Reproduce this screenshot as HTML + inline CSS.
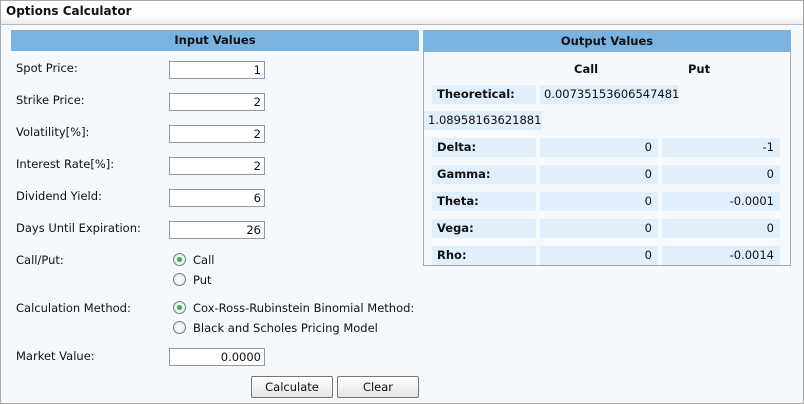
<!DOCTYPE html><html><head><style>
*{margin:0;padding:0;box-sizing:border-box}
body{width:804px;height:404px;background:#fff;font-family:"DejaVu Sans","Liberation Sans",sans-serif;font-size:11.5px;color:#111;position:relative;overflow:hidden}
.a{position:absolute}
.frame{left:0;top:0;width:804px;height:404px;border:1px solid #a8a8a8;background:#f5f9fc}
.top{left:1px;top:1px;width:802px;height:24px;background:linear-gradient(#fff,#fff 60%,#ececec);border-bottom:1px solid #b8b8b8;font-weight:bold;font-size:12px;padding:3px 5px}
.hd{background:#7ab3e0;font-weight:bold;text-align:center;height:21px;line-height:21px}
.lbl{left:16px}
.in{left:169px;width:96px;height:18px;background:#fff;border:1px solid #7f9db9;text-align:right;padding-right:3px;line-height:16px}
.rad{width:13px;height:13px;border-radius:50%;border:1px solid #6c7d90;background:radial-gradient(#fff,#dde4ea)}
.rad.on::after{content:"";position:absolute;left:3px;top:3px;width:5px;height:5px;border-radius:50%;background:#3bb34a}
.cell{background:#e1eefb;height:19px;line-height:19px}
.b{font-weight:bold;padding-left:5px}
.r{text-align:right;padding-right:6px}
.btn{height:22px;border:1px solid #777;border-radius:2px;background:linear-gradient(#fff,#e4e4e4);text-align:center;line-height:20px}
</style></head><body>
<div class="a frame"></div>
<div class="a top">Options Calculator</div>
<div class="a hd" style="left:11px;top:30px;width:408px">Input Values</div>
<div class="a lbl" style="top:61px">Spot Price:</div><div class="a in" style="top:61px">1</div>
<div class="a lbl" style="top:93px">Strike Price:</div><div class="a in" style="top:93px">2</div>
<div class="a lbl" style="top:125px">Volatility[%]:</div><div class="a in" style="top:125px">2</div>
<div class="a lbl" style="top:157px">Interest Rate[%]:</div><div class="a in" style="top:157px">2</div>
<div class="a lbl" style="top:189px">Dividend Yield:</div><div class="a in" style="top:189px">6</div>
<div class="a lbl" style="top:221px">Days Until Expiration:</div><div class="a in" style="top:221px">26</div>
<div class="a lbl" style="top:253px">Call/Put:</div>
<div class="a rad on" style="left:173px;top:253px"></div><div class="a" style="left:193px;top:253px">Call</div>
<div class="a rad" style="left:173px;top:273px"></div><div class="a" style="left:193px;top:273px">Put</div>
<div class="a lbl" style="top:301px">Calculation Method:</div>
<div class="a rad on" style="left:173px;top:301px"></div><div class="a" style="left:193px;top:301px">Cox-Ross-Rubinstein Binomial Method:</div>
<div class="a rad" style="left:173px;top:321px"></div><div class="a" style="left:193px;top:321px">Black and Scholes Pricing Model</div>
<div class="a lbl" style="top:349px">Market Value:</div><div class="a in" style="top:348px">0.0000</div>
<div class="a btn" style="left:251px;top:376px;width:82px">Calculate</div>
<div class="a btn" style="left:337px;top:376px;width:82px">Clear</div>

<div class="a" style="left:423px;top:30px;width:368px;height:236px;border:1px solid #a8a8a8;border-top:none"></div>
<div class="a hd" style="left:423px;top:30px;width:368px;height:22px;line-height:22px">Output Values</div>
<div class="a" style="left:574px;top:62px;font-weight:bold">Call</div>
<div class="a" style="left:688px;top:62px;font-weight:bold">Put</div>
<div class="a cell b" style="left:432px;top:85px;width:104px">Theoretical:</div>
<div class="a cell" style="left:540px;top:85px;width:138px;padding-left:4px">0.00735153606547481</div>
<div class="a cell" style="left:424px;top:111px;width:118px;padding-left:4px">1.08958163621881</div>
<div class="a cell b" style="left:432px;top:138px;width:104px">Delta:</div><div class="a cell r" style="left:540px;top:138px;width:118px">0</div><div class="a cell r" style="left:662px;top:138px;width:118px">-1</div>
<div class="a cell b" style="left:432px;top:165px;width:104px">Gamma:</div><div class="a cell r" style="left:540px;top:165px;width:118px">0</div><div class="a cell r" style="left:662px;top:165px;width:118px">0</div>
<div class="a cell b" style="left:432px;top:192px;width:104px">Theta:</div><div class="a cell r" style="left:540px;top:192px;width:118px">0</div><div class="a cell r" style="left:662px;top:192px;width:118px">-0.0001</div>
<div class="a cell b" style="left:432px;top:219px;width:104px">Vega:</div><div class="a cell r" style="left:540px;top:219px;width:118px">0</div><div class="a cell r" style="left:662px;top:219px;width:118px">0</div>
<div class="a cell b" style="left:432px;top:246px;width:104px;height:19px">Rho:</div><div class="a cell r" style="left:540px;top:246px;width:118px">0</div><div class="a cell r" style="left:662px;top:246px;width:118px">-0.0014</div>
</body></html>
